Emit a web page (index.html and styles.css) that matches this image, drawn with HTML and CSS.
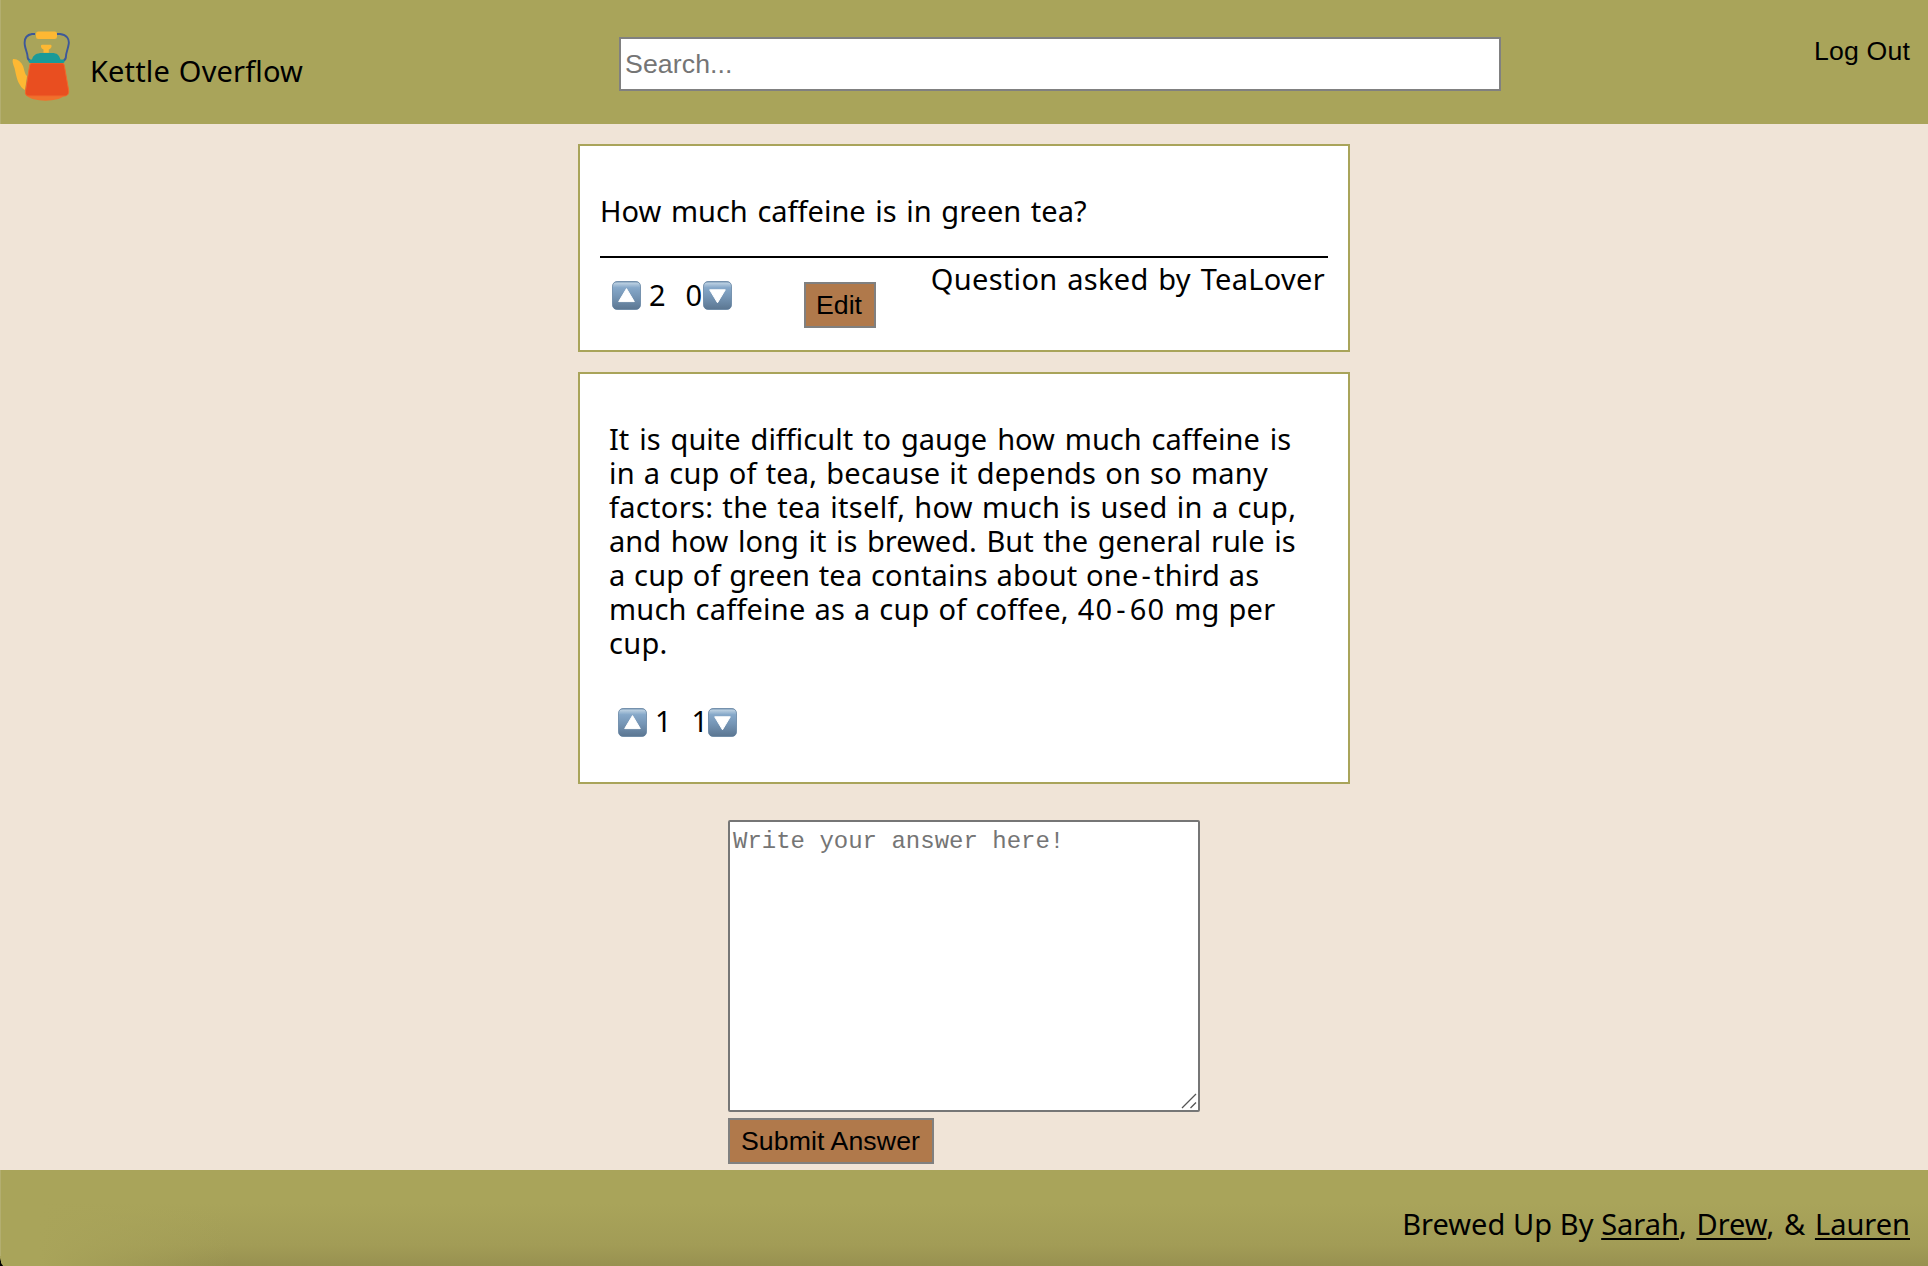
FILE: index.html
```html
<!DOCTYPE html>
<html lang="en">
<head>
<meta charset="utf-8">
<title>Kettle Overflow</title>
<link rel="stylesheet" href="styles.css">
</head>
<body>
<svg class="defs" width="0" height="0" aria-hidden="true">
  <defs>
    <linearGradient id="key" x1="0" y1="0" x2="0" y2="1">
      <stop offset="0" stop-color="#6f90ae"/>
      <stop offset=".06" stop-color="#b9cee0"/>
      <stop offset=".22" stop-color="#86a8c9"/>
      <stop offset=".55" stop-color="#7595b5"/>
      <stop offset="1" stop-color="#5b7691"/>
    </linearGradient>
    <symbol id="vote-up" viewBox="0 0 29 29">
      <rect x=".5" y=".5" width="28" height="28" rx="4.6" fill="url(#key)" stroke="#5f7f9f" stroke-opacity=".75"/>
      <path d="M14.5 7.6 22.3 20.6H6.7Z" fill="#fff" stroke="#fff" stroke-width="1" stroke-linejoin="round"/>
    </symbol>
    <symbol id="vote-down" viewBox="0 0 29 29">
      <rect x=".5" y=".5" width="28" height="28" rx="4.6" fill="url(#key)" stroke="#5f7f9f" stroke-opacity=".75"/>
      <path d="M14.5 21.8 22.3 8.8H6.7Z" fill="#fff" stroke="#fff" stroke-width="1" stroke-linejoin="round"/>
    </symbol>
  </defs>
</svg>

<header class="header">
  <a class="brand">
    <svg class="logo" viewBox="0 0 58 70" aria-hidden="true">
      <path d="M1 28C0 30 1 33 2.500 37C4 43 5 50 8 54C9.500 57 11.500 58 13 59L15 45C12.500 43 12.500 39 11 35C9.500 31 5 27.500 1 28Z" fill="#fdb833"/>
      <path d="M14 64C20 71.500 47 71.500 53 64Z" fill="#f0712c"/>
      <path d="M23 3H20C14 4 12 8 12.800 14C13.500 19 15.500 22 15.500 25C15.500 27 16 29 18 29.500M45 3H48C55 4 57.500 8 56.700 13C56 18 54 22 54 25C54 27 53.500 29 51.500 29.500" fill="none" stroke="#3d5899" stroke-width="1.900"/>
      <path d="M20 32H50C51.500 32 52 33 52.400 35L56.600 59C57 63 55.500 65 52 65H17C14 65 13 63 13.500 60L17.600 35C18 33 18.500 32 20 32Z" fill="#e94e20" stroke="#f0692a" stroke-width="1"/>
      <path d="M20 28.500C21 24 25 22 30 22H40C45 22 47 24 48.500 28.500H51C53 29 53 32 51 32H18.500C16 32 16 29 18 28.500Z" fill="#1a9a98"/>
      <path d="M30 13.800H38.500C40.500 14 39.500 18 36.800 18.500V21.700H31.500V18.500C29 18 28 14 30 13.800Z" fill="#fdb833"/>
      <rect x="24" y=".6" width="21" height="7.400" rx="2.300" fill="#fdb833"/>
    </svg>
    <span class="brand-name">Kettle Overflow</span>
  </a>
  <input class="search" type="text" placeholder="Search...">
  <a class="logout">Log Out</a>
</header>

<main class="main">
  <section class="card question">
    <p class="question-text">How much caffeine is in green tea?</p>
    <div class="question-meta">
      <div class="votes">
        <svg class="key"><use href="#vote-up"/></svg><span class="up-count">2</span><span class="down-count">0</span><svg class="key"><use href="#vote-down"/></svg>
      </div>
      <button class="button edit">Edit</button>
      <span class="author">Question asked by TeaLover</span>
    </div>
  </section>

  <section class="card answer">
    <p class="answer-text">
      <span class="line">It is quite difficult to gauge how much caffeine is</span>
      <span class="line">in a cup of tea, because it depends on so many</span>
      <span class="line">factors: the tea itself, how much is used in a cup,</span>
      <span class="line">and how long it is brewed. But the general rule is</span>
      <span class="line">a cup of green tea contains about one<span class="hyphen">-</span>third as</span>
      <span class="line">much caffeine as a cup of coffee, <span class="amount">40<span class="hyphen">-</span>60</span> mg per</span>
      <span class="line">cup.</span>
    </p>
    <div class="votes">
      <svg class="key"><use href="#vote-up"/></svg><span class="up-count">1</span><span class="down-count">1</span><svg class="key"><use href="#vote-down"/></svg>
    </div>
  </section>

  <form class="answer-form">
    <div class="field">
      <textarea class="answer-input" placeholder="Write your answer here!"></textarea>
      <svg class="grip" viewBox="0 0 16 16" aria-hidden="true"><path d="M1 15 15 1M9.500 15 15 9.500" fill="none" stroke="#555" stroke-width="1.300"/></svg>
    </div>
    <button class="button submit" type="button">Submit Answer</button>
  </form>
</main>

<footer class="footer">
  <p class="credits"><span class="by">Brewed Up By </span><a>Sarah</a>, <a>Drew</a>, &amp; <a>Lauren</a></p>
</footer>
</body>
</html>
```
FILE: styles.css
```css
* { box-sizing: border-box; }

body {
  display: flex;
  flex-direction: column;
  height: 1266px;
  margin: 0;
  overflow: hidden;
  background: #f0e4d7;
  color: #000;
  font: 29px/34px "Noto Sans", sans-serif;
}

p { margin: 0; }

.defs { position: absolute; }

.header {
  display: flex;
  align-items: flex-start;
  justify-content: space-between;
  flex: none;
  height: 124px;
  padding: 31px 18px 0 12px;
  background: linear-gradient(#b3ae70, #b3ae70) 0 0 / 1px 100% no-repeat #a9a45a;
}

.brand {
  display: flex;
  width: 607px;
}

.logo {
  width: 58px;
  height: 70px;
}

.brand-name {
  margin: 23px 0 0 20px;
  letter-spacing: .15px;
  word-spacing: 1.2px;
}

.search {
  width: 882px;
  height: 54px;
  margin: 6px 0 0;
  padding: 0 4px;
  border: 2px solid #808080;
  border-radius: 0;
  background: #fff;
  font: 26.67px "Liberation Sans", sans-serif;
  letter-spacing: .1px;
}

.search::placeholder,
.answer-input::placeholder { color: #757575; }

.logout {
  width: 409px;
  padding-top: 5px;
  font: 26.67px/30px "Liberation Sans", sans-serif;
  letter-spacing: .15px;
  text-align: right;
}

.main {
  flex: none;
  width: 772px;
  height: 1046px;
  margin: 0 auto;
  padding-top: 20px;
}

.card {
  border: 2px solid #a9a45a;
  background: #fff;
}

.question {
  height: 208px;
  padding: 48px 20px 0;
}

.question-text {
  height: 64px;
  border-bottom: 2px solid #000;
  word-spacing: 2.1px;
}

.question-meta {
  display: flex;
  align-items: flex-start;
}

.votes {
  display: flex;
  align-items: center;
}

.key {
  flex: none;
  width: 29px;
  height: 29px;
}

.up-count { margin: -1px 20px 0 8px; }
.down-count { margin-top: -1px; }

.question .votes {
  width: 192px;
  padding: 21px 0 0 12px;
}

.question .down-count { margin-right: 1px; }

.button {
  height: 46px;
  padding: 0 11px;
  border: 2px solid #808080;
  border-radius: 0;
  background: #b0794b;
  color: #000;
  font: 26.67px "Liberation Sans", sans-serif;
}

.edit {
  width: 72px;
  margin: 24px 0 0 12px;
  padding: 0 2px 0 0;
}

.author {
  flex: 1;
  margin-top: 4px;
  padding-right: 3px;
  letter-spacing: .3px;
  word-spacing: 1.9px;
  text-align: right;
}

.answer {
  height: 412px;
  margin-top: 20px;
  padding: 48px 29px 0;
}

.line {
  display: block;
  white-space: nowrap;
}

.line:nth-child(1) { word-spacing: 2.4px; }
.line:nth-child(2) { letter-spacing: .2px; word-spacing: 1.3px; }
.line:nth-child(3) { letter-spacing: .3px; word-spacing: 1.3px; }
.line:nth-child(4) { word-spacing: 2.1px; }
.line:nth-child(5) { letter-spacing: .2px; word-spacing: .8px; }
.line:nth-child(6) { letter-spacing: .2px; word-spacing: 1.2px; }
.line:nth-child(7) { letter-spacing: .3px; }

.hyphen { padding: 0 3px; }
.amount { letter-spacing: 1.2px; }

.answer .votes { padding: 46px 0 0 9px; }
.answer .up-count { margin-top: -2px; }
.answer .down-count { margin-top: -2px; }

.answer-form {
  display: flex;
  flex-direction: column;
  align-items: flex-start;
  gap: 6px;
  width: 472px;
  margin: 36px auto 0;
}

.field {
  position: relative;
  width: 472px;
  height: 292px;
}

.answer-input {
  display: block;
  width: 100%;
  height: 100%;
  padding: 6px 4px 4px 3px;
  border: 2px solid #767676;
  border-radius: 2px;
  background: #fff;
  font: 24px/27px "Liberation Mono", monospace;
  resize: none;
}

.grip {
  position: absolute;
  right: 3px;
  bottom: 3px;
  width: 16px;
  height: 16px;
}

.submit {
  width: 206px;
  padding: 0 1px 0 0;
  letter-spacing: .1px;
}

.footer {
  flex: none;
  height: 96px;
  padding: 37px 18px 0;
  background:
    radial-gradient(ellipse 3px 10px at 100% 0, transparent 85%, #000) 0 100% / 3px 10px no-repeat,
    linear-gradient(#b3ae70, #b3ae70) 0 0 / 1px 86px no-repeat,
    linear-gradient(90deg, #a9a45a 40px, rgba(169, 164, 90, 0) 230px),
    linear-gradient(#a9a45a 35%, #a29c56 78%, #989150);
  text-align: right;
}

.credits { word-spacing: 2.2px; }
.by { word-spacing: .2px; }

.credits a {
  text-decoration: underline;
  text-decoration-thickness: 2px;
  text-underline-offset: 3px;
  text-decoration-skip-ink: none;
}
```
